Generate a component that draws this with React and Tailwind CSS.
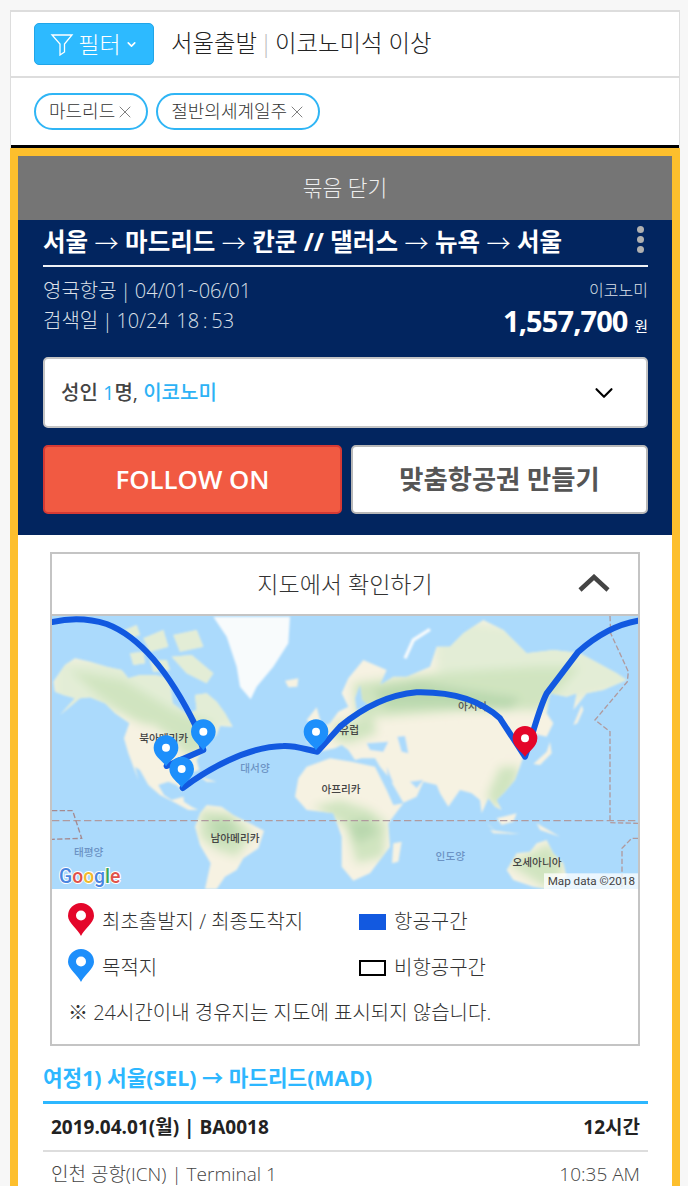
import React from "react";
import { ChevronDown, X } from "lucide-react";

const font = { fontFamily: '"Open Sans", "Noto Sans CJK KR", sans-serif' };

// map coordinates: 3 units per screen pixel
const land = [
  // north america
  "M40,215 L75,165 L105,145 L150,155 L200,170 L245,180 L265,205 L300,195 L345,195 L385,205 L392,235 L398,280 L440,312 L470,300 L465,255 L500,250 L530,275 L555,310 L578,350 L540,348 L530,375 L500,395 L490,420 L470,450 L478,480 L450,490 L420,515 L428,545 L410,525 L385,515 L355,525 L372,555 L395,570 L430,560 L432,575 L455,590 L475,600 L445,600 L405,578 L360,555 L325,525 L300,480 L285,470 L295,510 L265,430 L252,385 L268,340 L225,310 L195,280 L150,262 L120,265 L60,315 L105,265 L70,255 L45,245 Z",
  // south america
  "M465,650 L480,610 L500,585 L545,590 L580,615 L610,630 L672,662 L655,715 L610,745 L590,780 L555,800 L530,837 L495,837 L512,760 L480,705 Z",
  // africa
  "M775,505 L800,470 L870,445 L935,455 L1005,470 L1040,540 L1060,585 L1090,580 L1045,640 L1050,710 L990,790 L940,812 L905,770 L905,680 L880,610 L800,600 L765,560 Z",
  // eurasia
  "M835,425 L828,400 L800,395 L815,370 L870,340 L895,305 L925,290 L905,250 L925,205 L970,150 L1040,180 L1020,225 L1060,200 L1100,200 L1170,170 L1190,110 L1230,110 L1270,70 L1330,30 L1390,60 L1460,130 L1540,120 L1620,130 L1730,190 L1760,210 L1690,240 L1640,250 L1600,300 L1610,250 L1580,260 L1530,250 L1520,310 L1540,340 L1520,380 L1475,370 L1462,405 L1450,440 L1440,470 L1425,510 L1395,545 L1370,570 L1385,600 L1365,590 L1345,565 L1325,610 L1320,570 L1295,550 L1260,540 L1225,590 L1200,550 L1190,525 L1150,515 L1130,560 L1090,578 L1045,500 L1020,470 L1005,445 L965,445 L945,450 L925,420 L905,405 L885,415 Z",
  // oceania, islands
  "M1400,780 L1430,730 L1470,725 L1490,700 L1520,690 L1540,730 L1570,760 L1580,800 L1520,837 L1480,830 L1420,810 Z",
  "M1060,700 L1085,695 L1075,755 L1056,760 Z",
  "M1480,462 L1520,425 L1530,395 L1535,430 L1500,465 Z",
  "M1600,345 L1625,285 L1630,300 L1612,340 Z",
  "M1310,610 L1350,650 L1370,665 L1340,640 Z M1370,625 L1430,610 L1420,635 L1385,645 Z M1490,640 L1560,680 L1500,660 Z M1350,660 L1440,672 L1360,670 Z",
  "M735,212 L775,205 L772,230 L745,232 Z",
  "M800,330 L830,292 L842,335 L815,345 Z",
  "M480,500 L530,515 L500,515 Z",
  // arctic islands
  "M255,60 L290,45 L300,75 L265,85 Z M310,85 L370,60 L385,110 L330,125 Z M400,75 L470,60 L490,110 L420,125 Z M395,140 L455,135 L520,190 L500,220 L440,190 Z M330,150 L380,150 L390,180 L340,185 Z M270,130 L310,125 L315,160 L280,165 Z",
];
const greenland = "M520,20 L750,20 L745,100 L700,170 L650,230 L632,268 L600,230 L590,170 L560,80 Z";

// soft colour patches, clipped to the land
const pale = [
  "M40,150 L600,150 L600,350 L440,360 L290,330 L200,300 L40,300 Z",
  "M230,30 L540,30 L540,220 L230,220 Z",
  "M1180,20 L1760,100 L1780,230 L1520,290 L1190,180 Z",
];
const green = [
  "M90,180 L250,210 L400,300 L520,340 L500,420 L440,440 L380,370 L280,330 L180,260 Z",
  "M480,600 L570,610 L640,670 L590,740 L530,720 L480,680 Z",
  "M820,590 L900,570 L990,600 L1040,640 L1030,740 L950,760 L920,650 Z",
  "M880,340 L1000,320 L1010,370 L930,400 L880,390 Z",
  "M940,220 L1180,190 L1480,170 L1620,170 L1500,300 L1300,300 L1040,320 L950,320 Z",
  "M1380,470 L1440,470 L1420,540 L1370,600 L1340,560 Z",
  "M1400,760 L1460,735 L1530,700 L1575,780 L1520,835 Z",
];
const dark = [
  "M1000,240 L1140,215 L1280,240 L1440,265 L1410,300 L1200,290 L1040,295 Z",
  "M920,640 L985,625 L1015,670 L950,700 Z",
  "M510,630 L570,630 L600,680 L530,690 Z",
];
const tan = ["M265,350 L350,345 L350,500 L300,490 Z"];
const waters = [
  "M980,400 L1045,395 L1030,425 L990,420 Z",
  "M1072,380 L1095,378 L1105,430 L1085,425 Z",
  "M945,265 L960,225 L966,270 L985,285 L950,300 Z",
  "M1110,515 L1150,510 L1130,535 Z",
  "M1040,470 L1060,520 L1045,510 Z",
];

const labels = [
  ["북아메리카", 371, 397, "#444"],
  ["대서양", 645, 486, "#6c93c4"],
  ["아프리카", 903, 550, "#444"],
  ["유럽", 928, 372, "#444"],
  ["아시아", 1298, 299, "#555"],
  ["남아메리카", 585, 695, "#444"],
  ["태평양", 146, 738, "#6c93c4"],
  ["인도양", 1231, 749, "#6c93c4"],
  ["오세아니아", 1491, 768, "#444"],
];

const Pin = ({ x, y, color }) => (
  <g transform={`translate(${x},${y})`}>
    <path d="M0,0 C-8,-16 -37,-28 -37,-56 A37,37 0 1 1 37,-56 C37,-28 8,-16 0,0 Z" fill={color} />
    <circle cx="0" cy="-56" r="12" fill="#fff" />
  </g>
);

const LegendPin = ({ color }) => (
  <svg width="26" height="33" viewBox="0 0 26 33" className="shrink-0 -translate-y-[3px]">
    <path d="M13,33 C10,26 0,20 0,13 A13,13 0 1 1 26,13 C26,20 16,26 13,33 Z" fill={color} />
    <circle cx="13" cy="12.5" r="5" fill="#fff" />
  </svg>
);

const Arrow = () => <span className="font-light text-[24px]">→</span>;

const WorldMap = () => (
  <svg viewBox="36 18 1758 819" className="block w-[586px] h-[273px]">
    <defs>
      <filter id="soft" x="-5%" y="-5%" width="110%" height="110%">
        <feGaussianBlur stdDeviation="2.5" />
      </filter>
      <filter id="wide" x="-10%" y="-10%" width="120%" height="120%">
        <feGaussianBlur stdDeviation="14" />
      </filter>
      <clipPath id="landClip">
        {land.map((d, i) => <path key={i} d={d} />)}
      </clipPath>
    </defs>
    <rect x="36" y="18" width="1758" height="819" fill="#abdafc" />
    <g filter="url(#soft)">
      <g clipPath="url(#landClip)">
        <rect x="36" y="18" width="1758" height="819" fill="#f6f2e2" />
        <g filter="url(#wide)">
          {pale.map((d, i) => <path key={i} d={d} fill="#e3edd6" />)}
          {green.map((d, i) => <path key={i} d={d} fill="#d0e4c0" />)}
          {dark.map((d, i) => <path key={i} d={d} fill="#b9d8ae" />)}
          {tan.map((d, i) => <path key={i} d={d} fill="#f6f2e2" />)}
        </g>
      </g>
      <path d={greenland} fill="#f8fbfc" />
      <path d="M1095,145 L1120,90 L1170,58" fill="none" stroke="#f8fbfc" strokeWidth="10" />
      {waters.map((d, i) => <path key={i} d={d} fill="#abdafc" />)}
    </g>
    <g fill="none" stroke="#b09a9e" strokeWidth="4">
      <path d="M36,632 L1794,632" strokeDasharray="22 10" />
      <path d="M1710,18 L1712,70 L1765,185 L1762,215 L1665,330 L1710,365 L1710,638 L1794,640 M1794,685 L1775,685 L1746,715 L1746,837" strokeDasharray="16 7" />
      <path d="M36,602 L98,602 L125,685 L36,688" strokeDasharray="16 7" stroke="#a58a90" />
    </g>
    <g fontSize="32" fontWeight="500" textAnchor="middle" style={font}>
      {labels.map(([t, x, y, c]) => <text key={t} x={x} y={y} fill={c}>{t}</text>)}
    </g>
    <g fill="none" stroke="#1259e0" strokeWidth="18" strokeLinejoin="round" strokeLinecap="round">
      <path d="M36,36 C90,24 150,26 200,42 C300,80 390,190 468,350 L490,420 L380,468" />
      <path d="M428,534 C500,480 620,410 730,408 C770,406 800,420 832,425 L900,350 C960,300 1040,255 1130,247 C1230,245 1320,270 1380,325 L1455,440 C1480,370 1495,300 1520,250 L1615,125 C1660,85 1720,45 1794,32" />
    </g>
    <Pin x={490} y={421} color="#1d8ffb" />
    <Pin x={378} y={469} color="#1d8ffb" />
    <Pin x={425} y={533} color="#1d8ffb" />
    <Pin x={828} y={421} color="#1d8ffb" />
    <Pin x={1455} y={441} color="#e4062a" />
    <text x="57" y="818" fontSize="58" fontWeight="500" stroke="#fff" strokeWidth="6" paintOrder="stroke" style={{ fontFamily: '"Roboto", sans-serif' }}>
      <tspan fill="#4a86e0">G</tspan><tspan fill="#e0524a">o</tspan><tspan fill="#f0b92d">o</tspan><tspan fill="#4a86e0">g</tspan><tspan fill="#3aa757">l</tspan><tspan fill="#e0524a">e</tspan>
    </text>
    <rect x="1512" y="790" width="282" height="47" fill="#fff" fillOpacity="0.75" />
    <text x="1523" y="825" fontSize="35" fill="#444" style={{ fontFamily: '"Roboto", sans-serif' }}>Map data ©2018</text>
  </svg>
);

const Chip = ({ label }) => (
  <div className="flex items-center h-[37px] pl-[13px] pr-[11px] rounded-full border-2 border-[#2fb5f5] bg-white text-[18px] text-[#333] font-light">
    <span>{label}</span>
    <X size={20} strokeWidth={0.9} className="text-[#555]" />
  </div>
);

export default function App() {
  return (
    <div className="w-[688px] h-[1186px] overflow-hidden bg-[#f7f7f7] pt-[10px] pl-[10px] pr-[8px]" style={font}>
      <div className="bg-white border-x border-[#ddd]">
        <div className="flex items-center h-[68px] pl-[23px] border-t-2 border-b-2 border-[#ddd]">
          <button className="flex items-center justify-center gap-[4px] w-[120px] h-[42px] rounded-[5px] bg-[#2dbaff] border border-[#20a5e8] text-white text-[23px] font-light">
            <svg width="24" height="24" viewBox="0 0 24 24" fill="none" stroke="#fff" strokeWidth="1.3">
              <path d="M2,3 L22,3 L14.5,12 L14.5,20 L10,23 L10,12 Z" />
            </svg>
            <span>필터</span>
            <ChevronDown size={13} strokeWidth={3} />
          </button>
          <div className="ml-[17px] text-[23.4px] font-light text-[#222] [word-spacing:-3.5px]">
            서울출발 <span className="text-[#bbb]">|</span> <span className="[word-spacing:0]">이코노미석 이상</span>
          </div>
        </div>
        <div className="flex items-center gap-[8px] h-[70px] pl-[23px] border-b-[3px] border-black">
          <Chip label="마드리드" />
          <Chip label="절반의세계일주" />
        </div>
        <div className="border-x-[8px] border-t-[8px] border-[#fdbf2d] -mx-px bg-white">
          <div className="flex items-center justify-center h-[64px] bg-[#757575] text-[21.5px] font-light text-[#eee]">묶음 닫기</div>
          <div className="h-[315px] bg-[#02255f] pl-[25px] pr-[24px]">
            <div className="relative flex items-center gap-[6.5px] h-[47px] border-b-2 border-[#eef1f6] text-[24.5px] font-bold text-white whitespace-nowrap">
              <span>서울</span><Arrow /><span>마드리드</span><Arrow /><span>칸쿤 // 댈러스</span><Arrow /><span>뉴욕</span><Arrow /><span>서울</span>
              <div className="absolute right-[4px] top-[6px] flex flex-col gap-[3px]">
                <span className="w-[7px] h-[7px] rounded-full bg-[#b0b0b0]" />
                <span className="w-[7px] h-[7px] rounded-full bg-[#b0b0b0]" />
                <span className="w-[7px] h-[7px] rounded-full bg-[#b0b0b0]" />
              </div>
            </div>
            <div className="flex justify-between h-[90px] pt-[9px]">
              <div className="text-[20px] leading-[30px] font-light text-[#dbe0e8] [word-spacing:-1.5px]">
                <div>영국항공 | 04/01~06/01</div>
                <div>검색일 | 10/24&nbsp; 18 : 53</div>
              </div>
              <div className="flex flex-col items-end text-white">
                <div className="text-[16px] leading-[26px] font-light text-[#dbe0e8] mt-[1px]">이코노미</div>
                <div className="leading-[36px] font-bold text-[29px] tracking-[-0.9px]">
                  1,557,700 <span className="text-[15px] font-normal tracking-normal">원</span>
                </div>
              </div>
            </div>
            <div className="flex items-center justify-between h-[71px] bg-white rounded-[5px] border-2 border-[#c4c4c4] pl-[16px] pr-[27px] text-[20px] font-medium text-[#444]">
              <div>성인 <span className="text-[#2db2f5]">1</span>명, <span className="text-[#2db2f5]">이코노미</span></div>
              <ChevronDown size={30} strokeWidth={1.7} className="text-black" />
            </div>
            <div className="flex gap-[9px] mt-[17px]">
              <button className="w-[299px] h-[69px] rounded-[5px] bg-[#f15a42] border-2 border-[#d63a34] text-white text-[25.8px] font-semibold">FOLLOW ON</button>
              <button className="flex-1 h-[69px] rounded-[5px] bg-white border-2 border-[#b8b8b8] text-[#555] text-[26.3px] font-bold">맞춤항공권 만들기</button>
            </div>
          </div>
          <div className="h-[700px] bg-white pl-[25px] pr-[24px] pt-[17px]">
            <div className="ml-[7px] w-[590px] border-2 border-[#c4c4c4]">
              <div className="relative flex items-center justify-center h-[62px] border-b-2 border-[#c4c4c4] text-[23px] font-light text-[#333]">
                지도에서 확인하기
                <svg width="32" height="18" viewBox="0 0 32 18" className="absolute right-[28px] top-[20px]" fill="none" stroke="#444" strokeWidth="4.5">
                  <path d="M2,16 L16,3 L30,16" />
                </svg>
              </div>
              <WorldMap />
              <div className="h-[155px] pl-[16px] pt-[16px] text-[#333] font-light text-[20px]">
                <div className="grid grid-cols-[291px_1fr]">
                  <div className="flex items-center gap-[8px] h-[34px]"><LegendPin color="#e4062a" /><span>최초출발지 / 최종도착지</span></div>
                  <div className="flex items-center gap-[8px] h-[34px]"><span className="w-[27px] h-[16px] bg-[#1259e0]" /><span>항공구간</span></div>
                </div>
                <div className="grid grid-cols-[291px_1fr] mt-[12px]">
                  <div className="flex items-center gap-[8px] h-[34px]"><LegendPin color="#1d8ffb" /><span>목적지</span></div>
                  <div className="flex items-center gap-[8px] h-[34px]"><span className="w-[27px] h-[16px] border-2 border-black" /><span>비항공구간</span></div>
                </div>
                <div className="mt-[13px]">※ 24시간이내 경유지는 지도에 표시되지 않습니다.</div>
              </div>
            </div>
            <div className="h-[55px] pt-[15px] text-[21.3px] font-bold text-[#2db7ff] leading-[34px]">여정1) 서울(SEL) → 마드리드(MAD)</div>
            <div className="flex items-center justify-between h-[51px] border-t-[3px] border-b-2 border-t-[#2db7ff] border-b-[#ddd] px-[8px] text-[19px] font-bold text-[#222]">
              <span>2019.04.01(월) | BA0018</span>
              <span>12시간</span>
            </div>
            <div className="flex items-center justify-between h-[44px] px-[8px] text-[19px] font-light text-[#444]">
              <span>인천 공항(ICN) | Terminal 1</span>
              <span>10:35 AM</span>
            </div>
          </div>
        </div>
      </div>
    </div>
  );
}
